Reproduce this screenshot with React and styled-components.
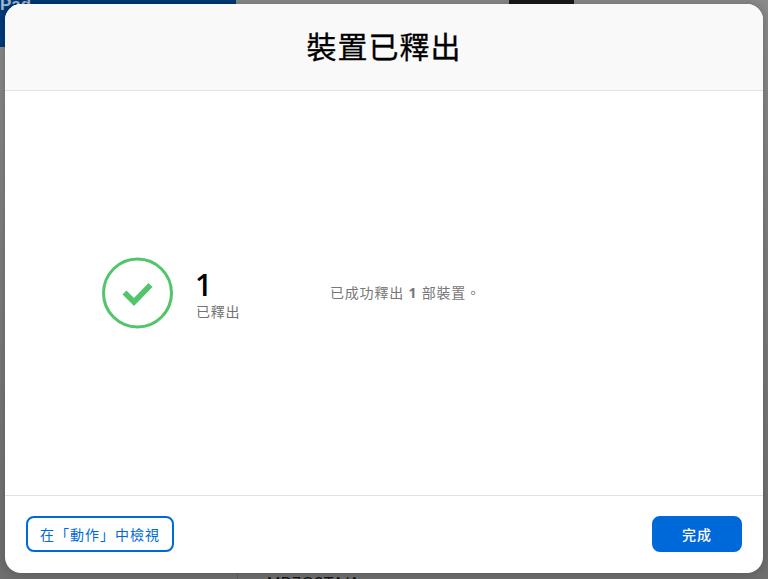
import React from 'react';
import styled, { createGlobalStyle } from 'styled-components';

const GlobalStyle = createGlobalStyle`
  html, body {
    margin: 0;
    padding: 0;
    overflow: hidden;
  }
  * {
    box-sizing: border-box;
  }
`;

const Page = styled.div`
  position: relative;
  width: 768px;
  height: 579px;
  overflow: hidden;
  display: flex;
  flex-direction: column;
  background: linear-gradient(#8c8c8c, #6f6f6f);
  font-family: 'Open Sans', 'Noto Sans CJK TC', sans-serif;
  text-spacing-trim: space-all;
`;

// What shows of the page behind the dialog
const BehindTop = styled.div`
  display: flex;
  height: 47px;
`;

const BlueLogo = styled.div`
  width: 236px;
  height: 47px;
  background: #003a7a;
  color: #a9b9cf;
  font-family: 'Liberation Sans', sans-serif;
  font-weight: 700;
  font-size: 17px;
  line-height: 10px;
  overflow: hidden;
`;

const DarkTab = styled.div`
  width: 65px;
  height: 10px;
  margin-left: 273px;
  background: #1a1a1a;
`;

const BehindBottom = styled.div`
  display: flex;
  height: 30px;
  margin-top: auto;
`;

const BehindColumn = styled.div`
  width: 238px;
  border-right: 1px solid #5f5f5f;
`;

const BehindLabel = styled.div`
  margin: 26px 0 0 29px;
  color: #111;
  font-family: 'Liberation Sans', sans-serif;
  font-size: 16px;
  line-height: 18px;
  letter-spacing: 0.5px;
`;

const Dialog = styled.div`
  position: absolute;
  left: 5px;
  top: 4px;
  width: 758px;
  height: 569px;
  display: flex;
  flex-direction: column;
  border-radius: 16px;
  overflow: hidden;
  background: #fff;
  box-shadow: 0 0 12px rgba(0, 0, 0, 0.25);
`;

const Header = styled.header`
  height: 87px;
  flex: none;
  display: flex;
  align-items: center;
  justify-content: center;
  padding-bottom: 4px;
  background: #f9f9f9;
  border-bottom: 1px solid #e2e2e2;
`;

const Title = styled.h1`
  margin: 0;
  font-size: 30px;
  font-weight: 400;
  color: #000;
  letter-spacing: 1px;
  -webkit-text-stroke: 0.3px #000;
`;

const Body = styled.main`
  flex: 1;
  display: flex;
  align-items: center;
  padding: 0 0 0 97px;
`;

const Result = styled.div`
  width: 228px;
  display: flex;
  align-items: center;
  gap: 21px;
`;

const Counter = styled.div`
  display: flex;
  flex-direction: column;
  padding-top: 6px;
`;

const Count = styled.div`
  font-size: 30px;
  line-height: 30px;
  font-weight: 600;
  color: #000;
`;

const CountLabel = styled.div`
  font-size: 14px;
  line-height: 20px;
  padding-left: 1px;
  margin-top: 2px;
  color: #737373;
  letter-spacing: 0.7px;
`;

const Message = styled.p`
  margin: 0 0 2px;
  font-size: 14px;
  color: #777;
  letter-spacing: 0.8px;

  b {
    font-weight: 700;
  }
`;

const Footer = styled.footer`
  height: 78px;
  flex: none;
  display: flex;
  align-items: center;
  justify-content: space-between;
  padding: 0 21px 1px;
  border-top: 1px solid #e2e2e2;
`;

const Button = styled.button`
  height: 36px;
  width: ${p => p.$width}px;
  padding: 0;
  border-radius: 8px;
  border: 2px solid #0069d9;
  background: ${p => (p.$primary ? '#0069d9' : '#fff')};
  color: ${p => (p.$primary ? '#fff' : '#0069d9')};
  font-family: inherit;
  font-size: 14px;
  font-weight: ${p => (p.$primary ? 500 : 400)};
  letter-spacing: 1px;
  text-spacing-trim: space-all;
`;

function CheckCircle() {
  return (
    <svg width="72" height="72" viewBox="0 0 72 72" fill="none">
      <circle cx="35.5" cy="36" r="34" stroke="#52c46b" strokeWidth="3" />
      <path d="M22.5 35.5 L32 45 L48.5 28" stroke="#52c46b" strokeWidth="5.5" />
    </svg>
  );
}

export default function App() {
  return (
    <Page>
      <GlobalStyle />
      <BehindTop>
        <BlueLogo>Pad</BlueLogo>
        <DarkTab />
      </BehindTop>
      <BehindBottom>
        <BehindColumn />
        <BehindLabel>MB7Q3TA/A</BehindLabel>
      </BehindBottom>
      <Dialog role="dialog">
        <Header>
          <Title>裝置已釋出</Title>
        </Header>
        <Body>
          <Result>
            <CheckCircle />
            <Counter>
              <Count>1</Count>
              <CountLabel>已釋出</CountLabel>
            </Counter>
          </Result>
          <Message>已成功釋出 <b>1</b> 部裝置。</Message>
        </Body>
        <Footer>
          <Button $width={148}>在「動作」中檢視</Button>
          <Button $primary $width={90}>完成</Button>
        </Footer>
      </Dialog>
    </Page>
  );
}
